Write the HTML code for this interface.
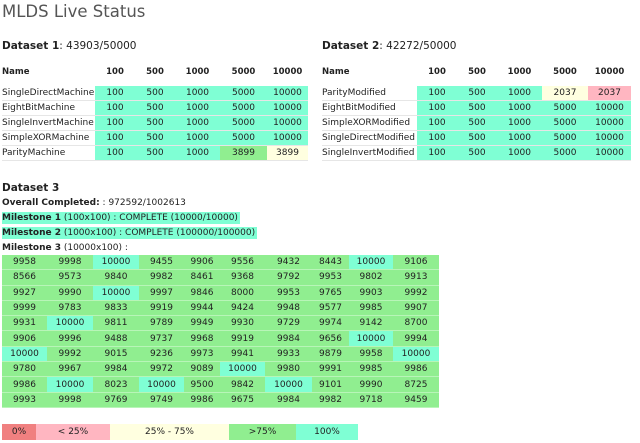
<!DOCTYPE html><html><head><style>
body{margin:0;width:640px;height:443px;background:#fff;font-family:"DejaVu Sans","Liberation Sans",sans-serif;color:#222;position:relative;overflow:hidden}
.a{position:absolute;white-space:nowrap}
h1{position:absolute;left:2px;top:2px;margin:0;font-size:16.5px;font-weight:normal;color:#555}
.h{font-size:10.5px}
table{border-collapse:collapse;font-size:9px;position:absolute;table-layout:fixed}
td{padding:0;height:14px;border-bottom:1px solid #e6e6e6;text-align:center;white-space:nowrap}
td.n{text-align:left;background:#fff}
th{font-size:8.5px;font-weight:bold;text-align:center;height:14px;padding:0}
th.n{text-align:left}
.q{background:#7fffd4}.g{background:#90ee90}.y{background:#ffffe0}.p{background:#ffb6c1}.r{background:#f08080}
.g3 td{border-bottom:1px solid #b8f5b8;height:14.3px}
.t{font-size:9px}
</style></head><body>
<h1>MLDS Live Status</h1>
<div class="a h" style="left:2px;top:40px"><b>Dataset 1</b>: 43903/50000</div>
<div class="a h" style="left:322px;top:40px"><b>Dataset 2</b>: 42272/50000</div>
<table style="left:2px;top:65px;width:306px">
<colgroup><col style="width:93px"><col style="width:40px"><col style="width:40px"><col style="width:45px"><col style="width:47px"><col style="width:41px"></colgroup>
<tr><th class="n">Name</th><th>100</th><th>500</th><th>1000</th><th>5000</th><th>10000</th></tr>
<tr><td style="height:7px;border:0" colspan="6"></td></tr>
<tr><td class="n">SingleDirectMachine</td><td class="q">100</td><td class="q">500</td><td class="q">1000</td><td class="q">5000</td><td class="q">10000</td></tr>
<tr><td class="n">EightBitMachine</td><td class="q">100</td><td class="q">500</td><td class="q">1000</td><td class="q">5000</td><td class="q">10000</td></tr>
<tr><td class="n">SingleInvertMachine</td><td class="q">100</td><td class="q">500</td><td class="q">1000</td><td class="q">5000</td><td class="q">10000</td></tr>
<tr><td class="n">SimpleXORMachine</td><td class="q">100</td><td class="q">500</td><td class="q">1000</td><td class="q">5000</td><td class="q">10000</td></tr>
<tr><td class="n">ParityMachine</td><td class="q">100</td><td class="q">500</td><td class="q">1000</td><td class="g">3899</td><td class="y">3899</td></tr>
</table>
<table style="left:322px;top:65px;width:309px">
<colgroup><col style="width:95px"><col style="width:40px"><col style="width:40px"><col style="width:45px"><col style="width:46px"><col style="width:43px"></colgroup>
<tr><th class="n">Name</th><th>100</th><th>500</th><th>1000</th><th>5000</th><th>10000</th></tr>
<tr><td style="height:7px;border:0" colspan="6"></td></tr>
<tr><td class="n">ParityModified</td><td class="q">100</td><td class="q">500</td><td class="q">1000</td><td class="y">2037</td><td class="p">2037</td></tr>
<tr><td class="n">EightBitModified</td><td class="q">100</td><td class="q">500</td><td class="q">1000</td><td class="q">5000</td><td class="q">10000</td></tr>
<tr><td class="n">SimpleXORModified</td><td class="q">100</td><td class="q">500</td><td class="q">1000</td><td class="q">5000</td><td class="q">10000</td></tr>
<tr><td class="n">SingleDirectModified</td><td class="q">100</td><td class="q">500</td><td class="q">1000</td><td class="q">5000</td><td class="q">10000</td></tr>
<tr><td class="n">SingleInvertModified</td><td class="q">100</td><td class="q">500</td><td class="q">1000</td><td class="q">5000</td><td class="q">10000</td></tr>
</table>
<div class="a h" style="left:2px;top:182px"><b>Dataset 3</b></div>
<div class="a t" style="left:2px;top:198px"><b>Overall Completed:</b> : 972592/1002613</div>
<div class="a t q" style="left:2px;top:212px;padding:1px 2px 1px 0"><b>Milestone 1</b> (100x100) : COMPLETE (10000/10000)</div>
<div class="a t q" style="left:2px;top:227px;padding:1px 2px 1px 0"><b>Milestone 2</b> (1000x100) : COMPLETE (100000/100000)</div>
<div class="a t" style="left:2px;top:243px"><b>Milestone 3</b> (10000x100) :</div>
<table class="g3" style="left:2px;top:255px;width:437px">
<colgroup><col style="width:45px"><col style="width:46px"><col style="width:46px"><col style="width:45px"><col style="width:36px"><col style="width:45px"><col style="width:47px"><col style="width:37px"><col style="width:44px"><col style="width:46px"></colgroup>
<tr><td class="g">9958</td><td class="g">9998</td><td class="q">10000</td><td class="g">9455</td><td class="g">9906</td><td class="g">9556</td><td class="g">9432</td><td class="g">8443</td><td class="q">10000</td><td class="g">9106</td></tr>
<tr><td class="g">8566</td><td class="g">9573</td><td class="g">9840</td><td class="g">9982</td><td class="g">8461</td><td class="g">9368</td><td class="g">9792</td><td class="g">9953</td><td class="g">9802</td><td class="g">9913</td></tr>
<tr><td class="g">9927</td><td class="g">9990</td><td class="q">10000</td><td class="g">9997</td><td class="g">9846</td><td class="g">8000</td><td class="g">9953</td><td class="g">9765</td><td class="g">9903</td><td class="g">9992</td></tr>
<tr><td class="g">9999</td><td class="g">9783</td><td class="g">9833</td><td class="g">9919</td><td class="g">9944</td><td class="g">9424</td><td class="g">9948</td><td class="g">9577</td><td class="g">9985</td><td class="g">9907</td></tr>
<tr><td class="g">9931</td><td class="q">10000</td><td class="g">9811</td><td class="g">9789</td><td class="g">9949</td><td class="g">9930</td><td class="g">9729</td><td class="g">9974</td><td class="g">9142</td><td class="g">8700</td></tr>
<tr><td class="g">9906</td><td class="g">9996</td><td class="g">9488</td><td class="g">9737</td><td class="g">9968</td><td class="g">9919</td><td class="g">9984</td><td class="g">9656</td><td class="q">10000</td><td class="g">9994</td></tr>
<tr><td class="q">10000</td><td class="g">9992</td><td class="g">9015</td><td class="g">9236</td><td class="g">9973</td><td class="g">9941</td><td class="g">9933</td><td class="g">9879</td><td class="g">9958</td><td class="q">10000</td></tr>
<tr><td class="g">9780</td><td class="g">9967</td><td class="g">9984</td><td class="g">9972</td><td class="g">9089</td><td class="q">10000</td><td class="g">9980</td><td class="g">9991</td><td class="g">9985</td><td class="g">9986</td></tr>
<tr><td class="g">9986</td><td class="q">10000</td><td class="g">8023</td><td class="q">10000</td><td class="g">9500</td><td class="g">9842</td><td class="q">10000</td><td class="g">9101</td><td class="g">9990</td><td class="g">8725</td></tr>
<tr><td class="g">9993</td><td class="g">9998</td><td class="g">9769</td><td class="g">9749</td><td class="g">9986</td><td class="g">9675</td><td class="g">9984</td><td class="g">9982</td><td class="g">9718</td><td class="g">9459</td></tr>
</table>
<table style="left:2px;top:424px;width:356px">
<colgroup><col style="width:34px"><col style="width:74px"><col style="width:119px"><col style="width:67px"><col style="width:62px"></colgroup>
<tr><td class="r" style="height:16px;border:0">0%</td><td class="p" style="border:0">&lt; 25%</td><td class="y" style="border:0">25% - 75%</td><td class="g" style="border:0">&gt;75%</td><td class="q" style="border:0">100%</td></tr>
</table>
</body></html>
